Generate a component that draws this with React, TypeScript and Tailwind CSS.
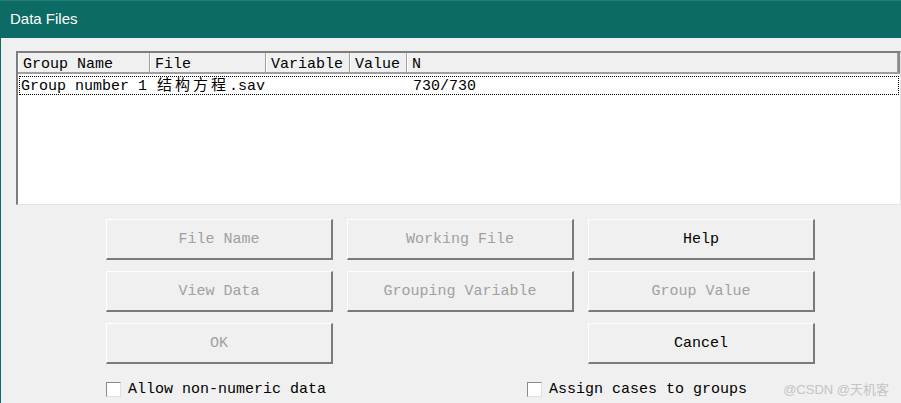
const mono = { fontFamily: '"Liberation Mono", "Noto Sans CJK SC", monospace' };

const columns = [
  { name: "Group Name", width: "w-[132px]" },
  { name: "File", width: "w-[116px]" },
  { name: "Variable", width: "w-[84px]" },
  { name: "Value", width: "w-[57px]" },
  { name: "N", width: "flex-1" },
];

const buttons = [
  { label: "File Name", enabled: false },
  { label: "Working File", enabled: false },
  { label: "Help", enabled: true },
  { label: "View Data", enabled: false },
  { label: "Grouping Variable", enabled: false },
  { label: "Group Value", enabled: false },
  { label: "OK", enabled: false },
  null,
  { label: "Cancel", enabled: true },
];

const Checkbox = ({ label }: { label: string }) => (
  <label className="flex items-center gap-[7px] text-[15px] leading-[18px] text-black whitespace-nowrap shrink-0">
    <span className="w-[15px] h-[15px] shrink-0 bg-white border-t border-l border-[#8a8a8a] border-r border-b border-r-[#e0e0e0] border-b-[#e0e0e0]" />
    <span className="pt-[1px]">{label}</span>
  </label>
);

export default function App() {
  return (
    <div className="w-[901px] h-[403px] bg-[#f0f0f0] flex flex-col overflow-hidden" style={mono}>
      {/* Title bar */}
      <div className="h-[38px] bg-[#0c6b64] border-t border-[#1f7d74] flex items-center pl-[10px] shrink-0">
        <span className="text-white text-[15px]" style={{ fontFamily: '"Liberation Sans", Arial, sans-serif' }}>
          Data Files
        </span>
      </div>

      <div className="flex-1 flex flex-col border-l border-[#0c6b64] pl-[15px] pt-[13px]">
        {/* List box */}
        <div className="h-[154px] shrink-0 bg-white border-t-2 border-l-2 border-[#7d7d7d] border-b border-r border-b-[#e3e3e3] border-r-[#e3e3e3] flex flex-col">
          <div className="flex h-[21px] bg-[#f0f0f0] border-b-2 border-[#a0a0a0] border-r-2 border-r-[#8a8a8a]">
            {columns.map((col) => (
              <div
                key={col.name}
                className={`${col.width} h-full border-l border-white border-r border-r-[#a0a0a0] pl-[4px] text-[15px] leading-[23px] text-black overflow-hidden`}
              >
                {col.name}
              </div>
            ))}
          </div>
          <div className="mt-[2px] ml-[1px] mr-[1px] h-[19px] border border-dotted border-black flex text-[15px] leading-[19px] text-black">
            <div className="w-[131px] pl-[1px] whitespace-nowrap">Group number 1</div>
            <div className="w-[116px] pl-[6px] whitespace-nowrap">
              <span className="tracking-[3px]">结构方程</span>.sav
            </div>
            <div className="w-[84px]" />
            <div className="w-[57px]" />
            <div className="flex-1 pl-[5px]">730/730</div>
          </div>
        </div>

        {/* Buttons */}
        <div className="ml-[90px] mt-[14px] grid grid-cols-[227px_227px_227px] gap-x-[14px] gap-y-[11px]">
          {buttons.map((b, i) =>
            b ? (
              <div
                key={i}
                className={`h-[41px] pt-[3px] flex items-center justify-center bg-[#f0f0f0] border-t border-l border-white border-r-2 border-b-2 border-r-[#7a7a7a] border-b-[#7a7a7a] text-[15px] ${
                  b.enabled ? "text-black" : "text-[#a0a0a0]"
                }`}
              >
                {b.label}
              </div>
            ) : (
              <div key={i} />
            )
          )}
        </div>

        {/* Checkboxes */}
        <div className="mt-[16px] flex items-center">
          <div className="ml-[90px] w-[421px] shrink-0">
            <Checkbox label="Allow non-numeric data" />
          </div>
          <Checkbox label="Assign cases to groups" />
          <span
            className="ml-auto mr-[12px] whitespace-nowrap text-[13px] text-[#c4c4c4]"
            style={{ fontFamily: '"Liberation Sans", "Noto Sans CJK SC", sans-serif' }}
          >
            @CSDN @天机客
          </span>
        </div>
      </div>
    </div>
  );
}
